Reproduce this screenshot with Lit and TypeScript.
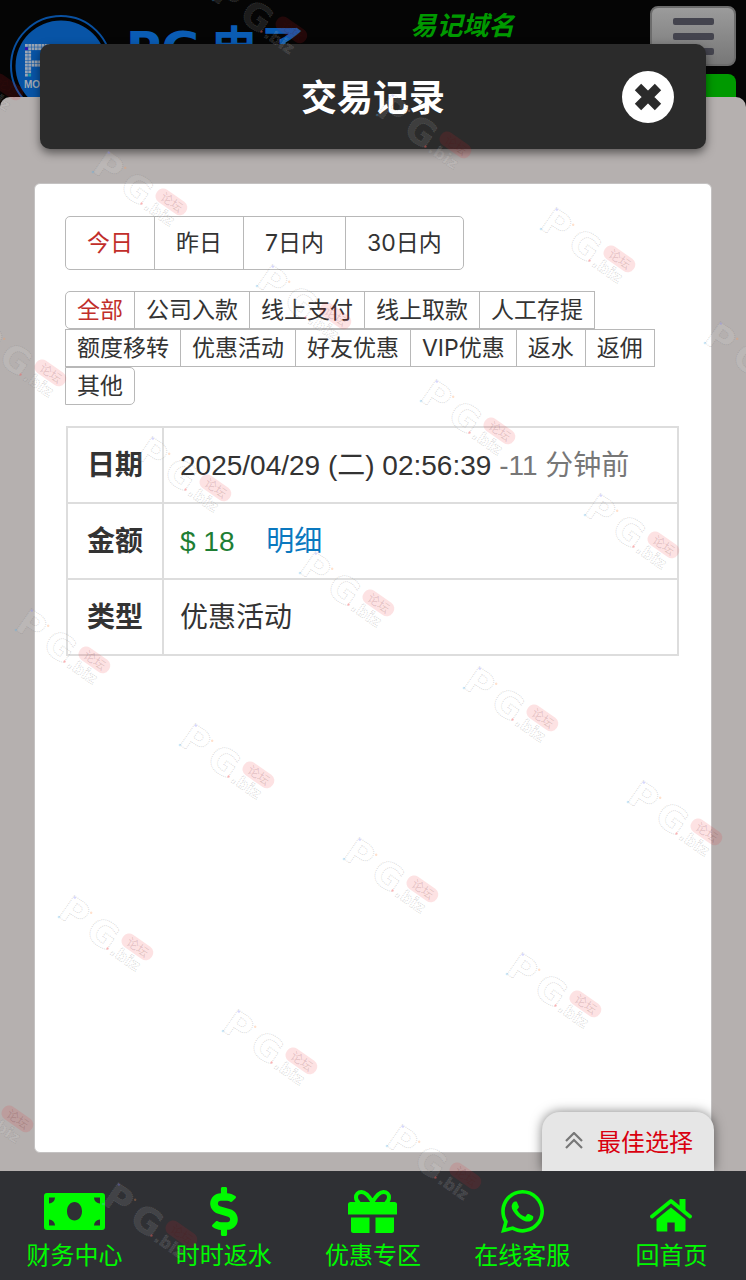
import { LitElement, html, css, svg, TemplateResult } from "lit";
import { customElement, state } from "lit/decorators.js";
import { classMap } from "lit/directives/class-map.js";

interface TradeRecord {
  date: string;
  ago: string;
  amount: string;
  kind: string;
}

const RANGES = ["今日", "昨日", "7日内", "30日内"];

const KINDS = [
  "全部", "公司入款", "线上支付", "线上取款", "人工存提",
  "额度移转", "优惠活动", "好友优惠", "VIP优惠", "返水", "返佣", "其他",
];

const RECORDS: TradeRecord[] = [
  { date: "2025/04/29 (二) 02:56:39", ago: "-11 分钟前", amount: "$ 18", kind: "优惠活动" },
];

const cashIcon = html`<svg width="61" height="37" viewBox="0 0 61 37" aria-hidden="true">
  <path fill="currentColor" fill-rule="evenodd" d="M3 0h55a3 3 0 0 1 3 3v31a3 3 0 0 1-3 3H3a3 3 0 0 1-3-3V3a3 3 0 0 1 3-3z
    M5 4.500v6a6 6 0 0 0 6-6z M56 4.500h-6a6 6 0 0 0 6 6z M5 32.500h6a6 6 0 0 0-6-6z M56 32.500v-6a6 6 0 0 0-6 6z
    M30.500 9c-4.300 0-7.500 4-7.500 9.300s3.200 9.300 7.500 9.300 7.500-4 7.500-9.300-3.200-9.300-7.500-9.300z"/>
</svg>`;

const dollarIcon = html`<svg width="28" height="49" viewBox="0 0 288 512" aria-hidden="true">
  <path fill="currentColor" d="M209.2 233.4l-108-31.6C88.700 198.200 80 186.500 80 173.500c0-16.300 13.200-29.500 29.500-29.500h66.300c12.200 0 24.200 3.700 34.200 10.500 6.100 4.100 14.300 3.100 19.500-2l34.800-34c7.100-6.900 6.100-18.400-1.800-24.500C238 74.800 207.400 64.100 176 64V16c0-8.800-7.200-16-16-16h-32c-8.800 0-16 7.200-16 16v48h-2.500C45.800 64-5.400 118.700.5 183.600c4.200 46.100 39.400 83.600 83.800 96.600l102.500 30c12.500 3.700 21.200 15.300 21.200 28.300 0 16.300-13.200 29.500-29.500 29.500h-66.300C100 368 88 364.300 78 357.500c-6.100-4.100-14.300-3.100-19.500 2l-34.800 34c-7.100 6.900-6.100 18.400 1.800 24.500 24.500 19.200 55.100 29.900 86.500 30v48c0 8.800 7.200 16 16 16h32c8.800 0 16-7.200 16-16v-48.200c46.600-.9 90.300-28.600 105.700-72.700 21.500-61.600-14.600-124.800-72.500-141.700z"/>
</svg>`;

const giftIcon = html`<svg width="49" height="43" viewBox="0 0 49 43" aria-hidden="true">
  <path fill="none" stroke="currentColor" stroke-width="4" stroke-linecap="round" d="M24.500 12C21 6 17.500 2 13.500 2 10 2 8 4.500 8 7.200c0 2 .8 3.800 2.500 5.300M24.500 12C28 6 31.500 2 35.500 2 39 2 41 4.500 41 7.200c0 2-.8 3.800-2.500 5.300"/>
  <path fill="currentColor" d="M2.500 12h44a2.500 2.500 0 0 1 2.500 2.500V24.500H0V14.500A2.500 2.500 0 0 1 2.500 12z"/>
  <path fill="currentColor" d="M3 27.500h18.500V43H5.500A2.500 2.500 0 0 1 3 40.500zM27.500 27.500H46V40.500a2.500 2.500 0 0 1-2.500 2.500h-16z"/>
</svg>`;

const chatIcon = html`<svg width="43" height="43" viewBox="0 32 448 448" aria-hidden="true">
  <path fill="currentColor" d="M380.9 97.1C339 55.1 283.2 32 223.9 32c-122.4 0-222 99.6-222 222 0 39.1 10.2 77.3 29.6 111L0 480l117.7-30.9c32.400 17.700 68.900 27 106.100 27h.1c122.300 0 224.100-99.600 224.100-222 0-59.300-25.200-115-67.100-157zm-157 341.600c-33.200 0-65.700-8.900-94-25.700l-6.700-4-69.800 18.300L72 359.200l-4.400-7c-18.500-29.400-28.200-63.300-28.200-98.200 0-101.700 82.800-184.500 184.600-184.500 49.300 0 95.600 19.200 130.400 54.100 34.800 34.900 56.200 81.200 56.100 130.500 0 101.800-84.900 184.600-186.600 184.600zm101.200-138.200c-5.500-2.800-32.800-16.200-37.900-18-5.100-1.900-8.800-2.800-12.500 2.800-3.700 5.600-14.300 18-17.600 21.800-3.200 3.700-6.500 4.200-12 1.400-32.600-16.300-54-29.100-75.500-66-5.700-9.800 5.700-9.100 16.300-30.300 1.800-3.700.9-6.900-.5-9.700-1.400-2.800-12.500-30.100-17.100-41.200-4.500-10.800-9.100-9.300-12.500-9.500-3.200-.2-6.900-.2-10.600-.2-3.700 0-9.700 1.400-14.800 6.900-5.100 5.600-19.400 19-19.400 46.300 0 27.300 19.900 53.700 22.600 57.400 2.800 3.700 39.100 59.700 94.800 83.800 35.200 15.200 49 16.500 66.600 13.900 10.700-1.600 32.800-13.400 37.400-26.400 4.600-13 4.600-24.100 3.200-26.400-1.300-2.500-5-3.900-10.500-6.600z"/>
</svg>`;

const homeIcon = html`<svg width="42" height="40" viewBox="0 0 42 40" aria-hidden="true">
  <path fill="none" stroke="currentColor" stroke-width="3.800" stroke-linecap="round" stroke-linejoin="round" d="M2 24.500L21 9l19 15.500"/>
  <path fill="currentColor" d="M29.500 7h6v15l-6-5z"/>
  <path fill="currentColor" d="M21 15.500l14.500 11.800V38a1.500 1.500 0 0 1-1.500 1.500h-9.300v-9h-7.400v9H8A1.500 1.500 0 0 1 6.500 38V27.300z"/>
</svg>`;

const NAV: { label: string; icon: TemplateResult }[] = [
  { label: "财务中心", icon: cashIcon },
  { label: "时时返水", icon: dollarIcon },
  { label: "优惠专区", icon: giftIcon },
  { label: "在线客服", icon: chatIcon },
  { label: "回首页", icon: homeIcon },
];

/** Blue round emblem with a dotted letter. */
@customElement("site-emblem")
export class SiteEmblem extends LitElement {
  static styles = css`
    :host { display: block; }
    .emblem { display: block; }
    .caption { font: 700 10px "Liberation Sans", sans-serif; }
  `;

  render() {
    const cells: TemplateResult[] = [];
    const rows = ["11111111", "11111111", "11000011", "11000011", "11000011", "11111111", "11111111", "11000000", "11000000", "11000000"];
    rows.forEach((row, y) =>
      [...row].forEach((bit, x) => {
        if (bit === "1") {
          const fill = x === 0 && y === 1 ? "#3a12b4" : x === 1 && y === 9 ? "#1c9aa8" : "#9aa5b4";
          cells.push(svg`<rect x=${15 + x * 3.3} y=${29 + y * 3.3} width="2.800" height="2.800" fill=${fill}></rect>` as TemplateResult);
        }
      })
    );
    return html`<svg class="emblem" width="102" height="102" viewBox="0 0 102 102" role="img" aria-label="PG">
      <circle cx="51" cy="51" r="50" fill="#020202" stroke="#0950a0" stroke-width="2"/>
      <circle cx="51" cy="51" r="45.500" fill="#0854a6"/>
      ${cells}
      <text class="caption" x="14" y="73" fill="#a3abb5">MOBILE</text>
    </svg>`;
  }
}

/** Origins of the tilted stamps scattered over the page. */
const STAMPS = [
  [212, -21], [-72, 36], [376, 94], [92, 151], [540, 208], [256, 265], [-29, 322], [704, 322],
  [420, 380], [136, 437], [584, 494], [299, 552], [15, 609], [463, 667], [179, 724], [627, 781],
  [343, 838], [58, 896], [506, 953], [222, 1010], [-62, 1068], [386, 1125], [102, 1183],
];

@customElement("stamp-layer")
export class StampLayer extends LitElement {
  static styles = css`
    :host { display: block; pointer-events: none; overflow: hidden; }
    .layer { display: block; width: 100%; height: 100%; }
    .big { font: 700 36px "DejaVu Sans", sans-serif; }
    .small { font: 700 16px "DejaVu Sans", sans-serif; }
    .pill { font: 400 12px "Noto Sans CJK SC", sans-serif; }
  `;

  render() {
    return html`<svg class="layer" aria-hidden="true">
      ${STAMPS.map(([x, y]) => svg`
        <g transform="translate(${x + 18} ${y}) rotate(35)">
          <g fill="#ffffff" fill-opacity="0.100" stroke="#808080" stroke-opacity="0.300" stroke-width="1" stroke-dasharray="1 1">
            <text class="big" x="-5" y="27">P</text>
            <text class="big" x="29" y="28">G</text>
            <text class="small" x="60" y="28">.biz</text>
          </g>
          <circle cx="0" cy="2" r="1.200" fill="#7a7aff" fill-opacity="0.300"></circle>
          <circle cx="22" cy="5" r="1.200" fill="#ff9a5a" fill-opacity="0.300"></circle>
          <circle cx="-2" cy="27" r="1.200" fill="#50b0f0" fill-opacity="0.300"></circle>
          <circle cx="56" cy="25" r="1.200" fill="#ff5a5a" fill-opacity="0.400"></circle>
          <rect x="62" y="-1" width="35" height="15" rx="7" fill="#ee1c24" fill-opacity="0.130"></rect>
          <text class="pill" x="68" y="11" fill="#501010" fill-opacity="0.160">论坛</text>
        </g>`)}
    </svg>`;
  }
}

@customElement("app-root")
export class AppRoot extends LitElement {
  @state() private range = 0;
  @state() private kind = 0;

  static styles = css`
    :host {
      display: block;
      color: #333;
      font-family: "Liberation Sans", "Noto Sans CJK SC", sans-serif;
    }
    * { box-sizing: border-box; }
    button { font: inherit; color: inherit; margin: 0; cursor: pointer; }
    a { text-decoration: none; }
    svg { display: block; }

    .page {
      position: relative;
      display: flex;
      flex-direction: column;
      min-height: 100vh;
      background: #050505;
      overflow: hidden;
    }

    .top {
      display: flex;
      align-items: flex-start;
      height: 97px;
      padding: 0 10px;
    }
    .emblem { flex: none; margin-top: 15px; }
    .brand {
      display: flex;
      gap: 10px;
      margin: 21px 0 0 14px;
      color: #0a5cb4;
      font: 700 48px/56px "DejaVu Sans", "Noto Sans CJK SC", sans-serif;
      white-space: nowrap;
    }
    .domain {
      flex: 1;
      margin: 5px 0 0 104px;
      color: #009900;
      font: italic 700 26px/38px "Noto Sans CJK SC", sans-serif;
      white-space: nowrap;
    }
    .side { display: flex; flex-direction: column; gap: 8px; width: 86px; padding-top: 6px; }
    .menu {
      display: flex;
      flex-direction: column;
      align-items: center;
      justify-content: center;
      gap: 8px;
      height: 60px;
      padding: 0;
      border: 2px solid #6c6c6c;
      border-radius: 8px;
      background: linear-gradient(#9b9b9b, #777);
    }
    .bar { width: 41px; height: 7px; border-radius: 2px; background: #44444e; }
    .login { height: 32px; border: 0; border-radius: 8px; background: #009900; }

    .body {
      flex: 1;
      display: flex;
      padding: 86px 34px 18px;
      border-radius: 10px 10px 0 0;
      background: #b5b0af;
    }
    .panel {
      flex: 1;
      display: flex;
      flex-direction: column;
      gap: 21px;
      padding: 32px 32px 32px 30px;
      border: 1px solid #c4c2c2;
      border-radius: 6px;
      background: #fff;
    }

    .filters { display: flex; padding-left: 1px; font: 400 23px/36px Inter, "Noto Sans CJK SC", sans-serif; }
    .filters.wrap { flex-wrap: wrap; }
    .pick {
      height: 54px;
      margin-left: -1px;
      padding: 0 21px;
      border: 1px solid #b8b8b8;
      background: transparent;
      white-space: nowrap;
    }
    .wrap .pick { height: 38px; padding: 0 11px; }
    .pick:first-child { border-radius: 5px 0 0 5px; }
    .pick:last-child { border-radius: 0 5px 5px 0; }
    .pick.on { color: #c12e2a; }

    .records { width: calc(100% - 1px); margin-left: 1px; border-collapse: collapse; font-size: 28px; line-height: 38px; }
    .records th, .records td { height: 76px; padding: 2px 16px 0; border: 2px solid #ddd; text-align: left; }
    .records th { width: 96px; padding: 2px 0 0; text-align: center; font-weight: 700; }
    .ago { color: #777; }
    .amount { color: #1e7e34; }
    .detail { margin-left: 24px; color: #0a78bf; }

    .dialog-bar {
      position: absolute;
      top: 44px;
      left: 40px;
      right: 40px;
      display: grid;
      grid-template-columns: 1fr auto 1fr;
      align-items: center;
      height: 105px;
      padding: 0 32px;
      border-radius: 10px;
      background: #2b2b2b;
      box-shadow: 0 4px 10px rgba(0, 0, 0, 0.5);
    }
    .title {
      grid-column: 2;
      margin: 0;
      padding-bottom: 4px;
      color: #fff;
      font: 700 36px/52px "Noto Sans CJK SC", sans-serif;
    }
    .close {
      justify-self: end;
      width: 52px;
      height: 52px;
      padding: 0;
      border: 0;
      border-radius: 50%;
      background: #fff;
      color: #2b2b2b;
    }

    .bottom { position: relative; }
    .best {
      position: absolute;
      right: 32px;
      bottom: 100%;
      display: flex;
      align-items: center;
      gap: 14px;
      height: 59px;
      padding: 0 21px 2px 23px;
      border: 0;
      border-radius: 18px 18px 0 0;
      background: #e6e6e6;
      color: #d9000f;
      box-shadow: 0 0 12px rgba(0, 0, 0, 0.5);
      font: 400 24px/36px "Noto Sans CJK SC", sans-serif;
    }
    .nav {
      position: relative;
      display: grid;
      grid-template-columns: repeat(5, 1fr);
      padding: 16px 0 10px;
      background: #2f3034;
    }
    .tab {
      display: flex;
      flex-direction: column;
      align-items: center;
      gap: 2px;
      color: #00fa00;
      font: 400 24px/32px "Noto Sans CJK SC", sans-serif;
    }
    .glyph { display: flex; align-items: center; height: 49px; }
    .stamps { position: absolute; inset: 0; }
  `;

  render() {
    return html`
      <div class="page">
        <header class="top">
          <site-emblem class="emblem"></site-emblem>
          <div class="brand"><span>PG</span><span>电子</span></div>
          <div class="domain">易记域名</div>
          <div class="side">
            <button class="menu" aria-label="菜单">
              <span class="bar"></span><span class="bar"></span><span class="bar"></span>
            </button>
            <button class="login" aria-label="登录"></button>
          </div>
        </header>

        <main class="body">
          <section class="panel">
            <div class="filters">
              ${RANGES.map((label, i) => html`<button
                class=${classMap({ pick: true, on: i === this.range })}
                aria-pressed=${i === this.range}
                @click=${() => (this.range = i)}>${label}</button>`)}
            </div>
            <div class="filters wrap">
              ${KINDS.map((label, i) => html`<button
                class=${classMap({ pick: true, on: i === this.kind })}
                aria-pressed=${i === this.kind}
                @click=${() => (this.kind = i)}>${label}</button>`)}
            </div>
            ${RECORDS.map((r) => html`
              <table class="records">
                <tbody>
                  <tr><th scope="row">日期</th><td>${r.date} <span class="ago">${r.ago}</span></td></tr>
                  <tr><th scope="row">金额</th><td><span class="amount">${r.amount}</span> <a class="detail" href="#">明细</a></td></tr>
                  <tr><th scope="row">类型</th><td>${r.kind}</td></tr>
                </tbody>
              </table>`)}
          </section>
        </main>

        <div class="bottom">
          <button class="best">
            <svg width="18" height="18" viewBox="0 0 18 18" aria-hidden="true">
              <path d="M1 9l8-8 8 8M1 16l8-8 8 8" fill="none" stroke="#777" stroke-width="2.200"/>
            </svg>
            <span>最佳选择</span>
          </button>
          <nav class="nav">
            ${NAV.map((n) => html`<a class="tab" href="#"><span class="glyph">${n.icon}</span><span>${n.label}</span></a>`)}
          </nav>
        </div>

        <div class="dialog-bar">
          <h1 class="title">交易记录</h1>
          <button class="close" aria-label="关闭">
            <svg width="52" height="52" viewBox="0 0 52 52" aria-hidden="true">
              <path d="M16 16l20 20M36 16L16 36" fill="none" stroke="currentColor" stroke-width="9"/>
            </svg>
          </button>
        </div>

        <stamp-layer class="stamps"></stamp-layer>
      </div>
    `;
  }
}
